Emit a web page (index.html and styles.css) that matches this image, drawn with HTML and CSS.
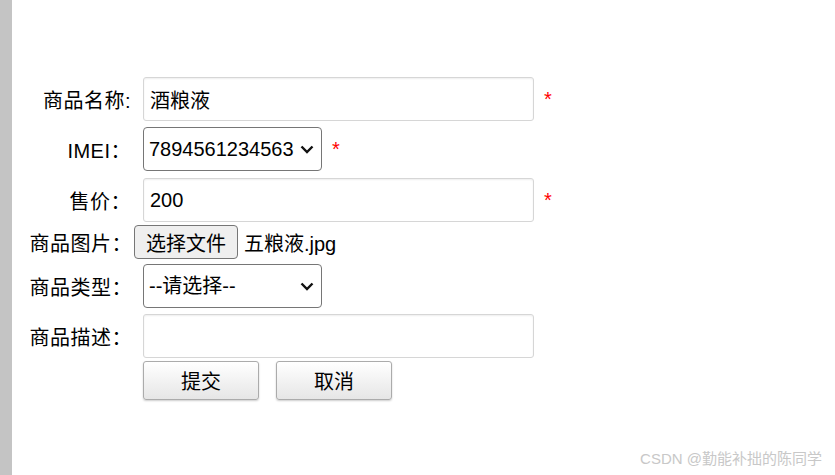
FILE: index.html
```html
<!DOCTYPE html>
<html lang="zh">
<head>
<meta charset="utf-8">
<title>商品</title>
<link rel="stylesheet" href="styles.css">
</head>
<body>
<div class="side"></div>
<main class="main">
  <form class="form">
    <div class="row r1">
      <label class="lbl">商品名称:</label>
      <input class="txt" type="text" value="酒粮液">
      <span class="star">*</span>
    </div>
    <div class="row r2">
      <label class="lbl">IMEI：</label>
      <span class="selwrap">
        <select class="sel"><option>7894561234563</option></select>
        <svg class="chev" width="14" height="9" viewBox="0 0 14 9"><path d="M1.5 1.5 L7 7 L12.5 1.5" fill="none" stroke="#111" stroke-width="2.4"/></svg>
      </span>
      <span class="star">*</span>
    </div>
    <div class="row r3">
      <label class="lbl">售价：</label>
      <input class="txt" type="text" value="200">
      <span class="star">*</span>
    </div>
    <div class="row r4">
      <label class="lbl">商品图片：</label>
      <button type="button" class="filebtn">选择文件</button>
      <span class="fname">五粮液.jpg</span>
    </div>
    <div class="row r5">
      <label class="lbl">商品类型：</label>
      <span class="selwrap">
        <select class="sel"><option>--请选择--</option></select>
        <svg class="chev" width="14" height="9" viewBox="0 0 14 9"><path d="M1.5 1.5 L7 7 L12.5 1.5" fill="none" stroke="#111" stroke-width="2.4"/></svg>
      </span>
    </div>
    <div class="row r6">
      <label class="lbl">商品描述：</label>
      <input class="txt" type="text" value="">
    </div>
    <div class="row r7">
      <span class="lbl"></span>
      <button type="button" class="btn">提交</button>
      <button type="button" class="btn btn2">取消</button>
    </div>
  </form>
  <div class="mark">CSDN @勤能补拙的陈同学</div>
</main>
</body>
</html>
```
FILE: styles.css
```css
html, body {
  margin: 0;
  padding: 0;
  height: 100%;
  background: #fff;
}
body {
  display: flex;
  font-family: "Liberation Sans", "Noto Sans CJK SC", Arial, sans-serif;
  font-size: 20px;
  color: #000;
}
.side {
  width: 12px;
  background: #c4c4c4;
  flex: none;
}
.main {
  flex: 1;
  position: relative;
  padding-top: 77px;
}
.form {
  display: flex;
  flex-direction: column;
}
.row {
  display: flex;
  align-items: center;
  height: 44px;
}
.r2 { margin-top: 6px; }
.r3 { margin-top: 7px; }
.r4 { margin-top: 3px; height: 34px; }
.r5 { margin-top: 5px; }
.r6 { margin-top: 6px; }
.r7 { margin-top: 3px; height: 39px; }
.lbl {
  width: 119px;
  text-align: right;
  flex: none;
  white-space: nowrap;
  letter-spacing: 0.5px;
}
.r4 .lbl, .r5 .lbl, .r6 .lbl { width: 120px; }
.txt {
  margin: 0 0 0 12px;
  width: 391px;
  height: 44px;
  box-sizing: border-box;
  border: 1px solid #d6d6d6;
  border-radius: 3px;
  box-shadow: inset 0 1px 2px rgba(0,0,0,0.07);
  padding: 0 6px;
  font: inherit;
  color: #000;
  outline: none;
}
.r4 .lbl + .filebtn { margin-left: 2px; }
.r5 .selwrap, .r6 .txt { margin-left: 11px; }
.star {
  color: #f00;
  margin-left: 10px;
  font-size: 20px;
}
.selwrap {
  position: relative;
  margin-left: 12px;
  display: inline-block;
  height: 44px;
}
.sel {
  -webkit-appearance: none;
  appearance: none;
  width: 179px;
  height: 44px;
  box-sizing: border-box;
  border: 1px solid #767676;
  border-radius: 4px;
  background: #fff;
  padding: 0 0 0 5px;
  font: inherit;
  color: #000;
  margin: 0;
}
.chev {
  position: absolute;
  right: 8px;
  top: 18px;
  pointer-events: none;
}
.filebtn {
  height: 34px;
  width: 104px;
  box-sizing: border-box;
  border: 1px solid #767676;
  border-radius: 4px;
  background: #efefef;
  font: inherit;
  color: #000;
  padding: 0;
  margin: 0;
}
.fname {
  margin-left: 6px;
}
.btn {
  margin: 0 0 0 12px;
  width: 116px;
  height: 39px;
  box-sizing: border-box;
  border: 1px solid #ababab;
  border-radius: 3px;
  background: linear-gradient(#ffffff, #e6e6e6);
  box-shadow: 0 1px 2px rgba(0,0,0,0.2);
  font: inherit;
  color: #000;
  padding: 0;
}
.btn2 { margin-left: 17px; }
.mark {
  position: absolute;
  right: 13px;
  bottom: 7px;
  font-size: 15px;
  color: #c8c8c8;
  white-space: nowrap;
}
```
